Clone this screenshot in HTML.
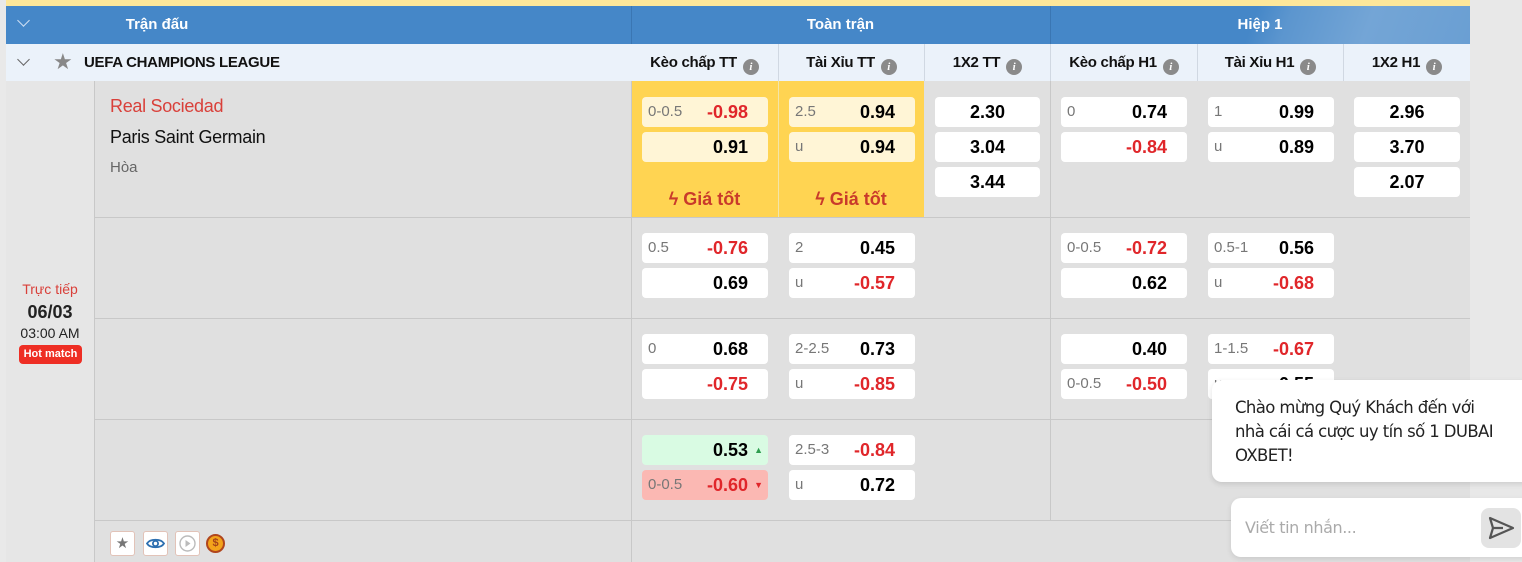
<!DOCTYPE html>
<html><head><meta charset="utf-8"><style>
*{box-sizing:border-box;margin:0;padding:0}
body{width:1522px;height:562px;overflow:hidden;background:#e4e4e4;font-family:"Liberation Sans",Arial,sans-serif;position:relative}
.a{position:absolute}
.hd{color:#fff;font-weight:bold;font-size:15px;text-align:center;line-height:38px;top:6px;height:38px}
.sh{top:44px;height:37px;background:#ebf2fa;line-height:37px;text-align:center;font-weight:bold;font-size:15px;color:#111;letter-spacing:-.3px}
.i{display:inline-block;width:16px;height:16px;border-radius:50%;background:#8a8a8a;color:#fff;font-size:11px;line-height:16px;font-style:italic;font-weight:bold;font-family:"Liberation Serif",serif;vertical-align:-3px;margin-left:6px;letter-spacing:0}
.b{position:absolute;height:30px;background:#fff;border-radius:4px;font-size:18px;font-weight:bold;line-height:30px}
.b .l{position:absolute;left:6px;font-size:15px;font-weight:normal;color:#777}
.b .v{position:absolute;right:20px}
.r{color:#e0262a}
.c{text-align:center}
.vl{position:absolute;width:1px;background:#c8c8c8}
.hl{position:absolute;height:1px;background:#c8c8c8}
.y{background:#fff5d6}
.chev{position:absolute;width:9px;height:9px;border-right:1.5px solid #fff;border-bottom:1.5px solid #fff;transform:rotate(45deg)}
</style></head><body>
<div class="a" style="left:0;top:0;width:1470px;height:6px;background:#fde79a"></div>
<div class="a" style="left:0;top:0;width:6px;height:562px;background:#e9e9e9"></div>
<div class="a" style="left:1470px;top:0;width:52px;height:562px;background:#e8e8e8"></div>
<div class="a" style="left:6px;top:6px;width:1464px;height:38px;background:#4587c8"></div>
<div class="a" style="left:1050px;top:6px;width:420px;height:38px;background:linear-gradient(110deg,rgba(255,255,255,0) 0,rgba(255,255,255,0) 48%,rgba(255,255,255,.12) 56%,rgba(255,255,255,.25) 75%,rgba(255,255,255,.2) 100%)"></div>
<div class="chev" style="left:19px;top:16px;border-color:#cfe0f3"></div>
<div class="a hd" style="left:94px;width:126px">Trận đấu</div>
<div class="a hd" style="left:631px;width:419px">Toàn trận</div>
<div class="a hd" style="left:1050px;width:420px">Hiệp 1</div>
<div class="vl" style="left:631px;top:6px;height:38px;background:#3a76b3"></div>
<div class="vl" style="left:1050px;top:6px;height:38px;background:#3a76b3"></div>
<div class="a sh" style="left:6px;width:625px;text-align:left">
<div class="chev" style="left:13px;top:11px;border-color:#666"></div>
<span class="a" style="left:47px;top:-1px;color:#888;font-size:22px;font-weight:normal">★</span>
<span class="a" style="left:78px">UEFA CHAMPIONS LEAGUE</span></div>
<div class="a sh" style="left:631px;width:147px">Kèo chấp TT<span class="i">i</span></div>
<div class="a sh" style="left:778px;width:146px;border-left:1px solid #d0d8e2">Tài Xỉu TT<span class="i">i</span></div>
<div class="a sh" style="left:924px;width:126px;border-left:1px solid #d0d8e2">1X2 TT<span class="i">i</span></div>
<div class="a sh" style="left:1050px;width:147px;border-left:1px solid #d0d8e2">Kèo chấp H1<span class="i">i</span></div>
<div class="a sh" style="left:1197px;width:146px;border-left:1px solid #d0d8e2">Tài Xỉu H1<span class="i">i</span></div>
<div class="a sh" style="left:1343px;width:127px;border-left:1px solid #d0d8e2">1X2 H1<span class="i">i</span></div>
<div class="a" style="left:6px;top:81px;width:88px;height:481px;background:#e6e6e6"></div>
<div class="a" style="left:95px;top:81px;width:1375px;height:481px;background:#e0e0e0"></div>
<div class="a" style="left:631px;top:81px;width:293px;height:136px;background:#ffd452"></div>
<div class="vl" style="left:778px;top:81px;height:136px;background:#f3e5a8"></div>
<div class="vl" style="left:94px;top:81px;height:481px"></div>
<div class="vl" style="left:631px;top:81px;height:481px"></div>
<div class="vl" style="left:1050px;top:81px;height:439px"></div>
<div class="hl" style="left:94px;top:217px;width:1376px"></div>
<div class="hl" style="left:94px;top:318px;width:1376px"></div>
<div class="hl" style="left:94px;top:419px;width:1376px"></div>
<div class="hl" style="left:94px;top:520px;width:1376px"></div>
<div class="a" style="left:110px;top:96px;font-size:18px;color:#d9403a;letter-spacing:-.3px">Real Sociedad</div>
<div class="a" style="left:110px;top:127px;font-size:18px;color:#111;letter-spacing:-.3px">Paris Saint Germain</div>
<div class="a" style="left:110px;top:159px;font-size:15px;color:#666">Hòa</div>
<div class="a c" style="left:6px;top:281px;width:88px;font-size:14px;color:#d9403a">Trực tiếp</div>
<div class="a c" style="left:6px;top:302px;width:88px;font-size:18px;font-weight:bold;color:#222">06/03</div>
<div class="a c" style="left:6px;top:325px;width:88px;font-size:14px;color:#222">03:00 AM</div>
<div class="a c" style="left:19px;top:345px;width:63px;height:19px;line-height:19px;background:#ee2e24;color:#fff;font-size:11px;font-weight:bold;border-radius:4px">Hot match</div>
<!-- row1 -->
<div class="b y" style="left:642px;top:97px;width:126px"><span class="l">0-0.5</span><span class="v r">-0.98</span></div>
<div class="b y" style="left:642px;top:132px;width:126px"><span class="v">0.91</span></div>
<div class="b y" style="left:789px;top:97px;width:126px"><span class="l">2.5</span><span class="v">0.94</span></div>
<div class="b y" style="left:789px;top:132px;width:126px"><span class="l">u</span><span class="v">0.94</span></div>
<div class="a c" style="left:631px;top:189px;width:147px;font-size:18px;font-weight:bold;color:#c93a2b">ϟ Giá tốt</div>
<div class="a c" style="left:778px;top:189px;width:146px;font-size:18px;font-weight:bold;color:#c93a2b">ϟ Giá tốt</div>
<div class="b c" style="left:935px;top:97px;width:105px">2.30</div>
<div class="b c" style="left:935px;top:132px;width:105px">3.04</div>
<div class="b c" style="left:935px;top:167px;width:105px">3.44</div>
<div class="b" style="left:1061px;top:97px;width:126px"><span class="l">0</span><span class="v">0.74</span></div>
<div class="b" style="left:1061px;top:132px;width:126px"><span class="v r">-0.84</span></div>
<div class="b" style="left:1208px;top:97px;width:126px"><span class="l">1</span><span class="v">0.99</span></div>
<div class="b" style="left:1208px;top:132px;width:126px"><span class="l">u</span><span class="v">0.89</span></div>
<div class="b c" style="left:1354px;top:97px;width:106px">2.96</div>
<div class="b c" style="left:1354px;top:132px;width:106px">3.70</div>
<div class="b c" style="left:1354px;top:167px;width:106px">2.07</div>
<!-- row2 -->
<div class="b" style="left:642px;top:233px;width:126px"><span class="l">0.5</span><span class="v r">-0.76</span></div>
<div class="b" style="left:642px;top:268px;width:126px"><span class="v">0.69</span></div>
<div class="b" style="left:789px;top:233px;width:126px"><span class="l">2</span><span class="v">0.45</span></div>
<div class="b" style="left:789px;top:268px;width:126px"><span class="l">u</span><span class="v r">-0.57</span></div>
<div class="b" style="left:1061px;top:233px;width:126px"><span class="l">0-0.5</span><span class="v r">-0.72</span></div>
<div class="b" style="left:1061px;top:268px;width:126px"><span class="v">0.62</span></div>
<div class="b" style="left:1208px;top:233px;width:126px"><span class="l">0.5-1</span><span class="v">0.56</span></div>
<div class="b" style="left:1208px;top:268px;width:126px"><span class="l">u</span><span class="v r">-0.68</span></div>
<!-- row3 -->
<div class="b" style="left:642px;top:334px;width:126px"><span class="l">0</span><span class="v">0.68</span></div>
<div class="b" style="left:642px;top:369px;width:126px"><span class="v r">-0.75</span></div>
<div class="b" style="left:789px;top:334px;width:126px"><span class="l">2-2.5</span><span class="v">0.73</span></div>
<div class="b" style="left:789px;top:369px;width:126px"><span class="l">u</span><span class="v r">-0.85</span></div>
<div class="b" style="left:1061px;top:334px;width:126px"><span class="v">0.40</span></div>
<div class="b" style="left:1061px;top:369px;width:126px"><span class="l">0-0.5</span><span class="v r">-0.50</span></div>
<div class="b" style="left:1208px;top:334px;width:126px"><span class="l">1-1.5</span><span class="v r">-0.67</span></div>
<div class="b" style="left:1208px;top:369px;width:126px"><span class="l">u</span><span class="v">0.55</span></div>
<!-- row4 -->
<div class="b" style="left:642px;top:435px;width:126px;background:#d9fbe3"><span class="v">0.53</span><span class="a" style="right:5px;font-size:9px;color:#2e9e4f">▲</span></div>
<div class="b" style="left:642px;top:470px;width:126px;background:#fbb8b3"><span class="l">0-0.5</span><span class="v r">-0.60</span><span class="a r" style="right:5px;font-size:9px">▼</span></div>
<div class="b" style="left:789px;top:435px;width:126px"><span class="l">2.5-3</span><span class="v r">-0.84</span></div>
<div class="b" style="left:789px;top:470px;width:126px"><span class="l">u</span><span class="v">0.72</span></div>
<!-- footer icons -->
<div class="a c" style="left:110px;top:531px;width:25px;height:25px;background:#fff;border:1px solid #e2c3b8;border-radius:3px;color:#777;font-size:15px;line-height:23px">★</div>
<div class="a" style="left:143px;top:531px;width:25px;height:25px;background:#fff;border:1px solid #e2c3b8;border-radius:3px"><svg width="23" height="23" viewBox="0 0 23 23"><path d="M3 11.5C6 6.5 17 6.5 20 11.5C17 16.5 6 16.5 3 11.5Z" fill="none" stroke="#2d6fb0" stroke-width="1.8"/><circle cx="11.5" cy="11.5" r="2.6" fill="none" stroke="#2d6fb0" stroke-width="1.8"/></svg></div>
<div class="a" style="left:175px;top:531px;width:25px;height:25px;background:#fff;border:1px solid #e2c3b8;border-radius:3px"><svg width="23" height="23" viewBox="0 0 23 23"><circle cx="11.5" cy="11.5" r="7.5" fill="none" stroke="#bbb" stroke-width="1.4"/><path d="M9.5 8L14.5 11.5L9.5 15Z" fill="#bbb"/></svg></div>
<div class="a c" style="left:206px;top:534px;width:19px;height:19px;border-radius:50%;background:#f3a31b;border:2px solid #b0461d;color:#a4421a;font-size:11px;font-weight:bold;line-height:15px">$</div>
<!-- chat -->
<div class="a" style="left:1212px;top:380px;width:320px;height:102px;background:#fff;border-radius:10px;box-shadow:0 2px 6px rgba(0,0,0,.12)"></div>
<div class="a" style="left:1235px;top:396px;width:262px;font-family:'DejaVu Sans',sans-serif;font-size:16.5px;line-height:24px;color:#222;letter-spacing:-.6px">Chào mừng Quý Khách đến với nhà cái cá cược uy tín số 1 DUBAI OXBET!</div>
<div class="a" style="left:1231px;top:498px;width:300px;height:59px;background:#fff;border-radius:10px;box-shadow:0 2px 6px rgba(0,0,0,.1)"></div>
<div class="a" style="left:1245px;top:518px;font-family:'DejaVu Sans',sans-serif;font-size:16px;color:#aaa;letter-spacing:-.4px">Viết tin nhắn...</div>
<div class="a" style="left:1481px;top:508px;width:40px;height:40px;background:#e3e3e3;border-radius:8px"><svg width="40" height="40" viewBox="0 0 40 40"><path d="M9 10L32 20L9 30L12 20Z M12 20H22" fill="none" stroke="#555" stroke-width="2.2" stroke-linejoin="round"/></svg></div>
</body></html>
